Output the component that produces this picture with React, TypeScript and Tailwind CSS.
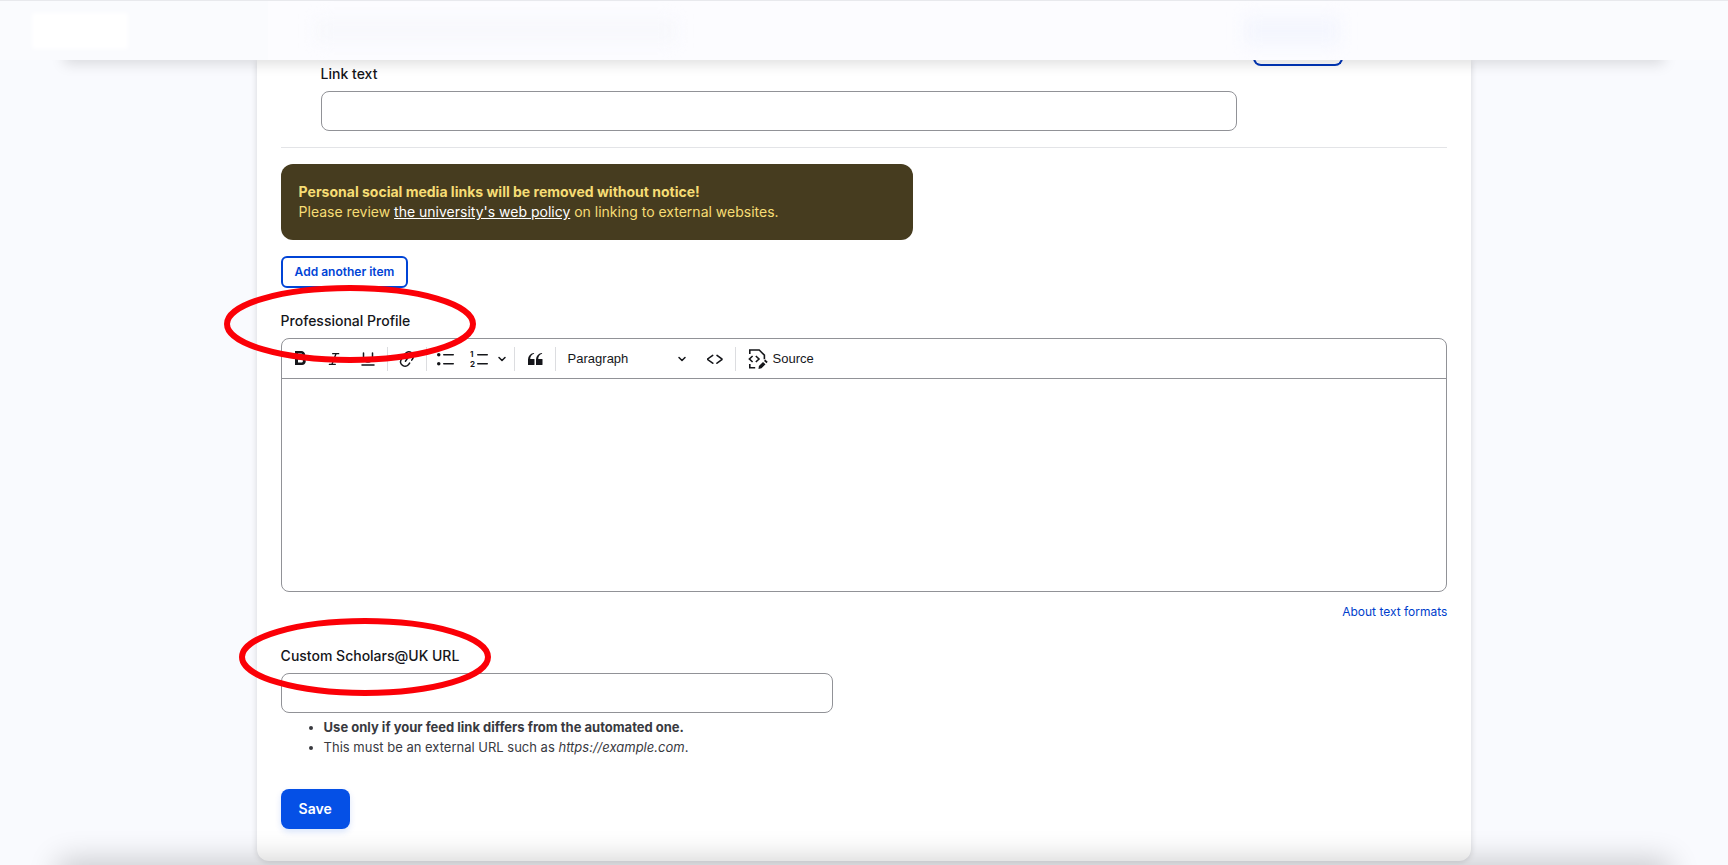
import type { ReactNode } from 'react';
import { Italic, Underline, ChevronDown } from 'lucide-react';
import { MdFormatBold } from 'react-icons/md';

const toolButton = 'flex h-7 w-7 items-center justify-center rounded';
const fieldBorder = 'rounded-lg border border-[#919297] bg-white';
const fieldLabel = 'block pb-[7px] text-sm leading-5 font-medium';

function ToolIcon({ children }: { children: ReactNode }) {
    return (
        <svg viewBox="0 0 20 20" className="h-5 w-5" fill="currentColor" aria-hidden="true">
            {children}
        </svg>
    );
}

function Divider() {
    return <span className="h-6 w-px bg-[#dcdde0]" />;
}

function Toolbar() {
    return (
        <div role="toolbar" aria-label="Editor toolbar" className="flex h-10 items-center border-b border-[#919297] pl-1 text-[#15161a]">
            <div className="flex gap-1.5 pr-[5px]">
                <button type="button" aria-label="Bold" className={toolButton}>
                    <MdFormatBold className="h-6 w-6" />
                </button>
                <button type="button" aria-label="Italic" className={toolButton}>
                    <Italic className="h-4 w-4" />
                </button>
                <button type="button" aria-label="Underline" className={toolButton}>
                    <Underline className="h-[18px] w-[18px]" />
                </button>
            </div>
            <Divider />
            <button type="button" aria-label="Link" className={`${toolButton} mx-[5px]`}>
                <ToolIcon>
                    <path d="m11.077 15 .991-1.416a.75.75 0 1 1 1.229.86l-1.148 1.64a.748.748 0 0 1-.217.206 5.251 5.251 0 0 1-8.503-5.955.741.741 0 0 1 .12-.274l1.147-1.639a.75.75 0 1 1 1.228.86L4.933 10.7l.006.003a3.75 3.75 0 0 0 6.132 4.294l.006.004zm5.494-5.335a.748.748 0 0 1-.12.274l-1.147 1.639a.75.75 0 1 1-1.228-.86l.86-1.23a3.75 3.75 0 0 0-6.144-4.301l-.86 1.229a.75.75 0 0 1-1.229-.86l1.148-1.64a.748.748 0 0 1 .217-.206 5.251 5.251 0 0 1 8.503 5.955zm-4.563-2.532a.75.75 0 0 1 .184 1.045l-3.155 4.505a.75.75 0 1 1-1.229-.86l3.155-4.506a.75.75 0 0 1 1.045-.184z" />
                </ToolIcon>
            </button>
            <Divider />
            <div className="flex pr-1 pl-[5px]">
                <button type="button" aria-label="Bulleted list" className={`${toolButton} mr-1.5`}>
                    <ToolIcon>
                        <circle cx="2.75" cy="5.75" r="1.75" />
                        <circle cx="2.75" cy="14.75" r="1.75" />
                        <rect x="7" y="5" width="11" height="1.5" rx="0.75" />
                        <rect x="7" y="14" width="11" height="1.5" rx="0.75" />
                    </ToolIcon>
                </button>
                <button type="button" aria-label="Numbered list" className={toolButton}>
                    <ToolIcon>
                        <text x="0" y="8" fontSize="8" fontWeight="700" fontFamily="Inter, sans-serif">1</text>
                        <text x="0" y="18" fontSize="8" fontWeight="700" fontFamily="Inter, sans-serif">2</text>
                        <rect x="7" y="5" width="11" height="1.5" rx="0.75" />
                        <rect x="7" y="14" width="11" height="1.5" rx="0.75" />
                    </ToolIcon>
                </button>
                <button type="button" aria-label="Numbered list options" className="flex h-7 w-4 items-center justify-center">
                    <ChevronDown className="h-3 w-3" strokeWidth={3} />
                </button>
            </div>
            <Divider />
            <button type="button" aria-label="Block quote" className={`${toolButton} mx-1.5`}>
                <ToolIcon>
                    <path d="M3 10.423a6.5 6.5 0 0 1 6.056-6.408l.038.67C6.448 5.423 5.354 7.663 5.22 10H9c.552 0 .5.432.5.986v4.511c0 .554-.448.503-1 .503h-5c-.552 0-.5-.449-.5-1.003v-4.574zm8 0a6.5 6.5 0 0 1 6.056-6.408l.038.67c-2.646.739-3.74 2.979-3.873 5.315H17c.552 0 .5.432.5.986v4.511c0 .554-.448.503-1 .503h-5c-.552 0-.5-.449-.5-1.003v-4.574z" />
                </ToolIcon>
            </button>
            <Divider />
            <button type="button" aria-haspopup="listbox" className="ml-3 flex h-7 w-30 items-center justify-between font-['Liberation_Sans',sans-serif] text-[13px]">
                Paragraph
                <ChevronDown className="h-3 w-3" strokeWidth={3} />
            </button>
            <button type="button" aria-label="Code" className={`${toolButton} mr-1.5 ml-[13px]`}>
                <ToolIcon>
                    <path d="m12.5 5.7 5.2 3.9v1.3l-5.6 4c-.1.2-.3.2-.5.2-.3-.1-.6-.7-.6-1l.3-.4 4.7-3.5L11.5 7l-.2-.2c-.1-.3-.1-.6 0-.8.2-.2.5-.4.8-.4a.8.8 0 0 1 .4.1zm-5.2 0L2 9.6v1.3l5.6 4c.1.2.3.2.5.2.3-.1.7-.7.6-1 0-.1 0-.3-.2-.4l-5-3.5L8.2 7l.2-.2c.1-.3.1-.6 0-.8-.2-.2-.5-.4-.8-.4a.8.8 0 0 0-.3.1z" />
                </ToolIcon>
            </button>
            <Divider />
            <button type="button" className="ml-3 flex h-7 items-center gap-[5px] font-['Liberation_Sans',sans-serif] text-[13px]">
                <ToolIcon>
                    <g fill="none" stroke="currentColor" strokeWidth="1.6">
                        <path d="M1.8 5V1h9.4l5.2 5.2v4M1.8 15v3.8h5.4" />
                        <path d="M4.6 7 1.4 10l3.2 3M7.8 7l3.2 3-3.2 3" />
                    </g>
                    <path d="m17.2 10.6 2.5 2.2-1.2 1.4-2.5-2.2zM15 13l2.5 2.2-4 4-3 .7.4-3z" />
                </ToolIcon>
                Source
            </button>
        </div>
    );
}

// Red ring drawn over a field label
function Highlight() {
    return (
        <svg viewBox="0 0 252 78" className="h-full w-full" fill="none" aria-hidden="true">
            <ellipse cx="126" cy="39" rx="123" ry="36" stroke="#fb0007" strokeWidth="6" />
        </svg>
    );
}

export default function App() {
    return (
        <div className="relative overflow-hidden bg-[#f9fafe] font-[Inter,sans-serif] text-[#15161a]">
            <header className="relative z-10 h-15 border-t border-[#e8e9ed]">
                <div className="absolute inset-x-16 bottom-0 -z-10 h-5 shadow-[0_4px_14px_rgba(0,0,0,0.13)]" />
                <div className="flex h-full items-center bg-[#fafbfe] pl-8">
                    <div className="h-9 w-24 bg-white blur-[2px]" />
                    <div className="mx-auto flex h-full w-[70.3%] items-center justify-between bg-[#fcfcff] pr-30 pl-12">
                        <div className="h-6 w-[360px] bg-[#f7f8fc] blur-sm" />
                        <div className="h-7 w-24 bg-[#f4f6fe] blur-sm" />
                    </div>
                    <div className="w-32" />
                </div>
            </header>

            <main className="mx-auto w-[70.3%] rounded-b-xl bg-white px-6 pb-8 shadow-[0_1px_6px_rgba(0,0,0,0.15)]">
                <form onSubmit={(e) => e.preventDefault()}>
                    <div className="flex gap-4 border-b border-[#e3e4e7] pb-4 pl-10">
                        <div className="w-[916px] pt-1">
                            <label htmlFor="link-text" className={fieldLabel}>Link text</label>
                            <input id="link-text" type="text" className={`block h-10 w-full px-4 ${fieldBorder}`} />
                        </div>
                        <button type="button" aria-label="Remove" className="-mt-2.5 h-4 w-[90px] rounded-b-lg border-2 border-t-0 border-[#0036b8]" />
                    </div>

                    <div className="mt-4 w-[632px] max-w-full rounded-xl bg-[#463c1f] p-[18px] text-sm leading-5 text-[#f6dd75]">
                        <strong className="block font-bold">Personal social media links will be removed without notice!</strong>
                        Please review <a href="#policy" className="text-white underline">the university's web policy</a> on linking to external websites.
                    </div>

                    <button type="button" className="mt-4 block h-8 rounded-md border-2 border-[#0044d6] px-3 text-xs font-semibold text-[#0044d6]">
                        Add another item
                    </button>

                    <div className="relative mt-[23px]">
                        <label htmlFor="profile" className={fieldLabel}>Professional Profile</label>
                        <div className={`overflow-hidden ${fieldBorder}`}>
                            <Toolbar />
                            <textarea id="profile" className="block h-53 w-full resize-none p-4 outline-none" />
                        </div>
                        <div className="pointer-events-none absolute -top-[26px] -left-[57px] z-20 h-[78px] w-[252px]">
                            <Highlight />
                        </div>
                    </div>
                    <div className="mt-3 flex justify-end text-xs leading-4">
                        <a href="#formats" className="text-[#003ecc]">About text formats</a>
                    </div>

                    <div className="relative mt-[26px]">
                        <label htmlFor="scholars-url" className={fieldLabel}>Custom Scholars@UK URL</label>
                        <input id="scholars-url" type="url" className={`block h-10 w-[552px] max-w-full px-4 ${fieldBorder}`} />
                        <div className="pointer-events-none absolute -top-7 -left-[42px] z-20 h-[78px] w-[252px]">
                            <Highlight />
                        </div>
                    </div>
                    <ul className="mt-1 list-disc pl-[43px] text-[13px] leading-5 text-[#393a3f]">
                        <li><strong className="font-bold">Use only if your feed link differs from the automated one.</strong></li>
                        <li>This must be an external URL such as <em>https://example.com</em>.</li>
                    </ul>

                    <button type="submit" className="mt-8 block h-10 rounded-lg bg-[#0550e6] px-[18px] text-sm font-semibold text-white shadow-[0_3px_6px_rgba(5,80,230,0.15)]">
                        Save
                    </button>
                </form>
            </main>
            <div className="h-[5px]" />
            <div className="pointer-events-none absolute inset-x-16 top-full z-10 h-5 shadow-[0_0_30px_6px_rgba(0,0,0,0.2)]" />
        </div>
    );
}
